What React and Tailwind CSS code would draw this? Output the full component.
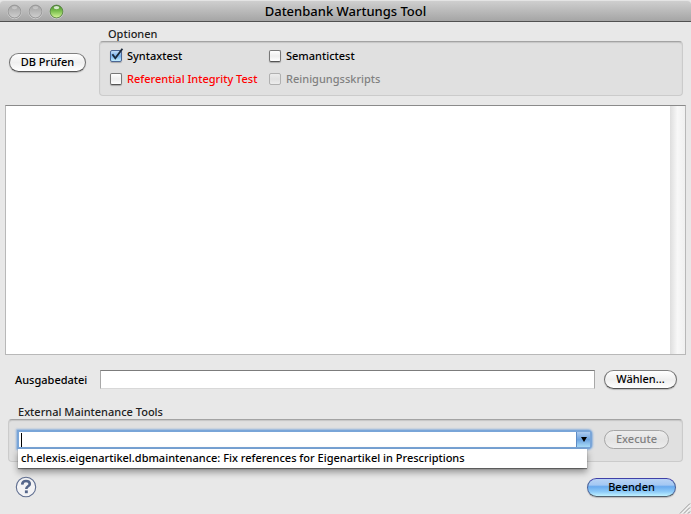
import { useState } from "react";

const pill =
  "h-[19px] shrink-0 rounded-full border text-center text-[11px] leading-[15px] pb-[2px] shadow-[0_1px_1px_rgba(0,0,0,0.2)]";
const plainPill =
  "border-[#707070] border-t-[#808080] border-b-[#555] bg-linear-to-b from-white via-[#efefef] to-white text-black";

function Light({ green, label }) {
  return (
    <button type="button" aria-label={label} className="block size-[15px]">
      <svg viewBox="0 0 15 15" className="block size-[15px]">
        <defs>
          <linearGradient id={label} x1="0" y1="0" x2="0" y2="1">
            <stop offset="0" stopColor={green ? "#4a8a2c" : "#a2a2a2"} />
            <stop offset="0.45" stopColor={green ? "#78bd4c" : "#b6b6b6"} />
            <stop offset="1" stopColor={green ? "#d6f79a" : "#cfcfcf"} />
          </linearGradient>
        </defs>
        <circle cx="7.5" cy="8" r="6.7" fill="none" stroke="#d8d8d8" strokeWidth="0.8" />
        <circle cx="7.5" cy="7.5" r="6.4" fill={`url(#${label})`} stroke={green ? "#4f7a3c" : "#909090"} strokeWidth="0.8" />
        <ellipse cx="7.5" cy="3.6" rx="2.8" ry="1.7" fill="#fff" opacity={green ? 0.75 : 0.3} />
      </svg>
    </button>
  );
}

function Check({ label, checked = false, disabled = false, className = "text-black" }) {
  const [on, setOn] = useState(checked);
  return (
    <label className={`flex h-[23px] items-center gap-[5px] leading-[14px] whitespace-nowrap ${className}`}>
      <span className="relative block size-3 shrink-0">
        <input
          type="checkbox"
          checked={on}
          disabled={disabled}
          onChange={(e) => setOn(e.target.checked)}
          className="block size-3 appearance-none rounded-[2px] border border-[#777] border-b-[#555] bg-linear-to-b from-white via-[#eee] to-white shadow-[0_1px_1px_rgba(0,0,0,0.25)] checked:border-[#4c6694] checked:from-[#c4dcf6] checked:via-[#76b1ee] checked:to-[#c5efff] disabled:border-[#b0b0b0] disabled:from-[#ececec] disabled:via-[#e0e0e0] disabled:to-[#ececec] disabled:shadow-none"
        />
        {on && (
          <svg viewBox="0 0 14 14" className="pointer-events-none absolute -top-[2px] left-0 size-[14px]">
            <path d="M2.4 6.2 L5.3 10.2 L12.4 0.8" fill="none" stroke="#1c2a3c" strokeWidth="1.9" />
          </svg>
        )}
      </span>
      {label}
    </label>
  );
}

const group =
  "rounded-[4px] border border-[#cbcbcb] border-t-[#a3a3a3] bg-[#e0e0e0] shadow-[inset_0_1px_1px_rgba(0,0,0,0.12)]";

export default function App() {
  return (
    <div className="flex min-h-screen flex-col bg-[#e8e8e8] font-['Noto_Sans','Lucida_Grande',sans-serif] text-[11px] font-medium text-black">
      <header className="grid h-[22px] grid-cols-[1fr_auto_1fr] items-center rounded-t-[4px] border-t border-b border-t-[#e4e4e4] border-b-[#515151] bg-linear-to-b from-[#cfcfcf] to-[#a5a5a5] px-[7px]">
        <div className="flex gap-[6px]">
          <Light label="close" />
          <Light label="minimize" />
          <Light label="zoom" green />
        </div>
        <h1 className="text-[13px] leading-[18px]">Datenbank Wartungs Tool</h1>
      </header>

      <main className="flex flex-1 flex-col">
        <section className="flex items-start gap-[13px] pr-2 pl-[9px]">
          <button type="button" className={`${pill} ${plainPill} mt-[31px] w-[77px]`}>
            DB Prüfen
          </button>
          <div role="group" aria-labelledby="options" className="min-w-0 flex-1 pt-[5px]">
            <h2 id="options" className="pl-[9px] leading-[14px] text-[#222]">
              Optionen
            </h2>
            <div className={`${group} grid h-[55px] grid-cols-[159px_1fr] content-start pt-[2px] pl-[10px]`}>
              <Check label="Syntaxtest" checked />
              <Check label="Semantictest" />
              <Check label="Referential Integrity Test" className="text-[#ff0000]" />
              <Check label="Reinigungsskripts" disabled className="text-[#808080]" />
            </div>
          </div>
        </section>

        <div className="mx-[5px] mt-[9px] flex min-h-[250px] flex-1 border border-[#b8b8b8] border-t-[#8a8a8a] bg-white">
          <textarea aria-label="Ergebnis" className="block min-w-0 flex-1 resize-none bg-white p-1 outline-none" />
          <div className="w-[15px] bg-linear-to-r from-[#dedede] via-[#f8f8f8] to-[#f0f0f0]" />
        </div>

        <div className="mt-[15px] flex items-center pr-[14px] pl-[15px]">
          <label htmlFor="output" className="w-[85px] leading-[14px]">
            Ausgabedatei
          </label>
          <input
            id="output"
            className="h-[19px] min-w-0 flex-1 border border-[#d8d8d8] border-t-[#7c7c7c] border-l-[#a8a8a8] border-r-[#a8a8a8] bg-white px-1 outline-none"
          />
          <button type="button" className={`${pill} ${plainPill} ml-[9px] w-[73px]`}>
            Wählen...
          </button>
        </div>

        <section className="mt-[16px] pr-2 pl-2">
          <h2 id="tools" className="pl-[10px] leading-[14px] text-[#222]">
            External Maintenance Tools
          </h2>
          <div className={`${group} flex h-[43px] items-start pt-[10px] pr-[13px] pl-2`}>
            <div className="relative min-w-0 flex-1">
              <div className="flex h-[19px] rounded-r-[4px] border-2 border-[#79a5d8] bg-white shadow-[0_0_2px_1px_rgba(110,160,220,0.7)]">
                <input
                  role="combobox"
                  aria-labelledby="tools"
                  aria-expanded="true"
                  aria-controls="tool-list"
                  className="min-w-0 flex-1 pl-[2px] caret-transparent outline-none"
                />
                <span className="pointer-events-none absolute top-[3px] left-1 h-[14px] w-px bg-black" />
                <button
                  type="button"
                  aria-label="Liste öffnen"
                  className="flex w-[14px] items-center justify-center border-l border-[#5d8cc6] bg-linear-to-b from-[#aecbee] via-[#6da3df] to-[#a9dcf8]"
                >
                  <svg viewBox="0 0 6 5" className="h-[5px] w-[6px]">
                    <path d="M0 0H6L3 5Z" fill="#000" />
                  </svg>
                </button>
              </div>
              <ul
                id="tool-list"
                role="listbox"
                className="absolute top-[19px] right-[5px] left-px bg-white pb-px pl-[3px] shadow-[0_4px_7px_rgba(0,0,0,0.4),0_1px_1px_rgba(0,0,0,0.4)]"
              >
                <li role="option" aria-selected="false" className="overflow-hidden leading-[18px] whitespace-nowrap">
                  ch.elexis.eigenartikel.dbmaintenance: Fix references for Eigenartikel in Prescriptions
                </li>
              </ul>
            </div>
            <button
              type="button"
              disabled
              className={`${pill} ml-3 w-[65px] border-[#a6a6a6] bg-linear-to-b from-[#ededed] via-[#e3e3e3] to-[#ededed] text-[#808080] shadow-none`}
            >
              Execute
            </button>
          </div>
        </section>

        <footer className="mt-[14px] flex items-start justify-between pr-[15px] pl-[15px]">
          <button type="button" aria-label="Hilfe" className="block size-[22px]">
            <svg viewBox="0 0 22 22" className="block size-[22px]">
              <circle cx="11" cy="11" r="9.7" fill="#f3f3f5" stroke="#5f6e90" strokeWidth="1.1" />
              <path
                d="M7.2 8.6 C7.3 6.2 8.9 5 11 5 C13.2 5 14.8 6.2 14.8 8 C14.8 10.4 11.3 10.2 11.3 13"
                fill="none"
                stroke="#55668a"
                strokeWidth="2.6"
              />
              <rect x="9.9" y="14.4" width="2.9" height="2.8" fill="#55668a" />
            </svg>
          </button>
          <button
            type="button"
            className={`${pill} mt-[2px] w-[89px] border-[#47619a] border-t-[#4040a8] border-b-[#52606e] bg-[linear-gradient(to_bottom,#b9d3f5_0%,#a4c8f3_35%,#69aaee_45%,#8ecbf8_75%,#c0f2ff_100%)] text-black`}
          >
            Beenden
          </button>
        </footer>
        <div className="flex h-[17px] items-end justify-end">
          <svg viewBox="0 0 12 12" className="mb-px block size-3">
            <path d="M1 11.5L11 1.5M5 11.5L11 5.5M9 11.5L11 9.5" stroke="#858585" strokeWidth="0.9" fill="none" />
            <path d="M2.2 11.5L11 2.7M6.2 11.5L11 6.7" stroke="#fff" strokeWidth="0.7" fill="none" />
          </svg>
        </div>
      </main>
    </div>
  );
}
